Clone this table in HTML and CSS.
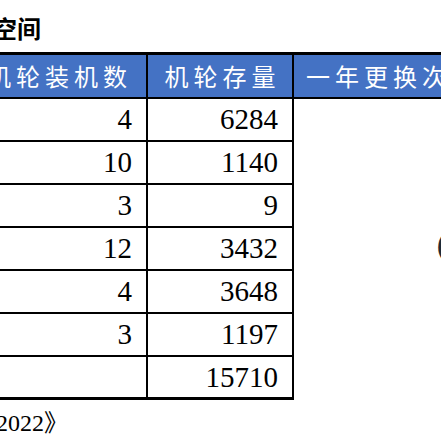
FILE: index.html
```html
<!DOCTYPE html>
<html lang="zh">
<head>
<meta charset="utf-8">
<link rel="stylesheet" href="styles.css">
</head>
<body>
<div class="page">
  <div class="title">空间</div>
  <table class="data">
    <thead>
      <tr>
        <th class="c1">机轮装机数</th>
        <th class="c2">机轮存量</th>
        <th class="c3">一年更换次数</th>
      </tr>
    </thead>
    <tbody>
      <tr><td class="num c1">4</td><td class="num c2">6284</td><td class="c3 merged" rowspan="7">(</td></tr>
      <tr><td class="num c1">10</td><td class="num c2">1140</td></tr>
      <tr><td class="num c1">3</td><td class="num c2">9</td></tr>
      <tr><td class="num c1">12</td><td class="num c2">3432</td></tr>
      <tr><td class="num c1">4</td><td class="num c2">3648</td></tr>
      <tr><td class="num c1">3</td><td class="num c2">1197</td></tr>
      <tr><td class="num c1"></td><td class="num c2">15710</td></tr>
    </tbody>
  </table>
  <div class="source">2022》</div>
</div>
</body>
</html>
```

FILE: styles.css
```css
html, body {
  margin: 0;
  padding: 0;
  background: #ffffff;
  overflow: hidden;
}
.page {
  width: 441px;
  height: 441px;
  overflow: hidden;
}
.title {
  font-family: "Noto Sans CJK SC", sans-serif;
  font-weight: 700;
  font-size: 24px;
  line-height: 30px;
  margin: 13px 0 0 -7px;
  height: 39px;
  color: #000;
}
.data {
  border-collapse: collapse;
  margin-left: -34px;
  table-layout: fixed;
  width: 600px;
}
.data th, .data td {
  padding: 0;
  border: 2px solid #000;
  box-sizing: border-box;
}
.data thead th {
  border-top: 3px solid #000;
  background: #4472c4;
  color: #ffffff;
  font-family: "Noto Sans CJK SC", sans-serif;
  font-weight: 400;
  font-size: 24px;
  letter-spacing: 5px;
  text-indent: 5px;
  height: 44px;
  line-height: 30px;
  text-align: center;
  white-space: nowrap;
  overflow: hidden;
}
.data thead th.c3 {
  text-align: left;
  padding-left: 12px;
  text-indent: 0;
}
.data .c1 { width: 180px; }
.data .c2 { width: 146px; }
.data .c3 { width: 274px; }
.data td {
  height: 43px;
  font-family: "Liberation Serif", serif;
  font-size: 29px;
  line-height: 30px;
  color: #000;
}
.data tbody tr:last-child td {
  border-bottom: 3px solid #000;
}
.data td.num {
  text-align: right;
  padding-right: 14px;
}
.data td.merged {
  font-family: "Liberation Sans", sans-serif;
  font-weight: 700;
  font-size: 24px;
  color: #1f2a36;
  vertical-align: middle;
  text-align: left;
  padding-left: 143px;
  padding-bottom: 5px;
  border: none;
  border-left: 2px solid #000;
}
.source {
  font-family: "Liberation Serif", "Noto Sans CJK SC", serif;
  font-size: 24px;
  line-height: 30px;
  margin: 8px 0 0 -4px;
  color: #000;
}
```
